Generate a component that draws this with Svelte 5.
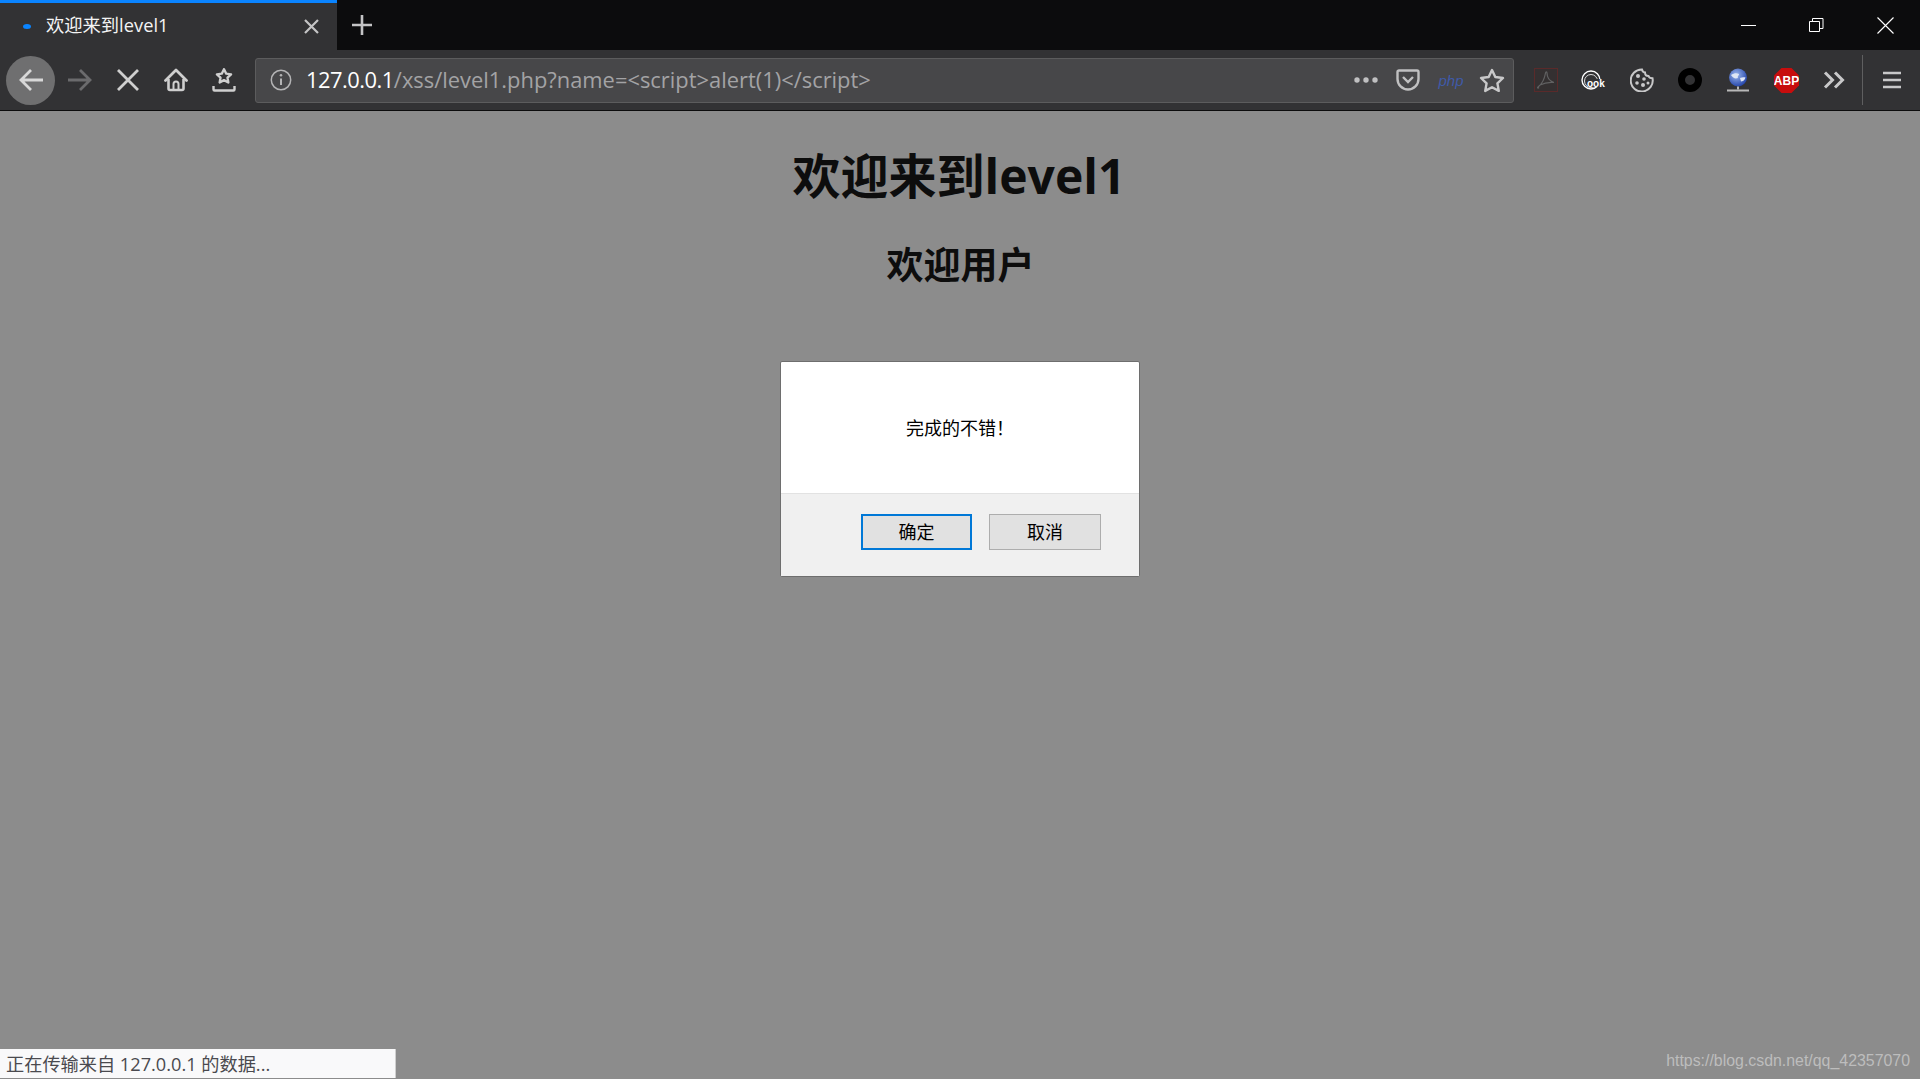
<script lang="ts">
	const title = '欢迎来到level1';
	const host = '127.0.0.1';
	const path = '/xss/level1.php?name=<script>alert(1)</' + 'script>';
</script>

<div class="browser">
	<div class="tabbar">
		<div class="tab">
			<span class="dot"></span>
			<span class="tab-title">{title}</span>
			<svg class="tab-close" width="17" height="17" viewBox="0 0 17 17"><path d="M2 2l13 13M15 2L2 15" stroke="#c4c4c5" stroke-width="2.200" /></svg>
		</div>
		<button class="newtab" aria-label="新建标签页">
			<svg width="22" height="22" viewBox="0 0 22 22"><path d="M11 1v20M1 11h20" stroke="#c4c4c5" stroke-width="2.600" /></svg>
		</button>
		<div class="win-controls">
			<svg width="16" height="16" viewBox="0 0 16 16"><path d="M0 8.500h15" stroke="#fff" stroke-width="1" /></svg>
			<svg width="16" height="16" viewBox="0 0 16 16"><path d="M.5 4.500h10v10H.5zM3.500 4V1.500h10.500v10H11" fill="none" stroke="#fff" stroke-width="1" /></svg>
			<svg width="17" height="17" viewBox="0 0 17 17"><path d="M.5.5l16 16M16.500.5l-16 16" stroke="#fff" stroke-width="1.100" /></svg>
		</div>
	</div>

	<div class="toolbar">
		<div class="nav">
			<button class="btn back" aria-label="后退">
				<svg width="26" height="26" viewBox="0 0 26 26"><path d="M25 13H3M13 3L3 13l10 10" fill="none" stroke="#d8d8d8" stroke-width="2.800" /></svg>
			</button>
			<button class="btn" aria-label="前进">
				<svg width="26" height="26" viewBox="0 0 26 26"><path d="M1 13h22M13 3l10 10-10 10" fill="none" stroke="#6b6b6d" stroke-width="2.800" /></svg>
			</button>
			<button class="btn" aria-label="停止">
				<svg width="24" height="24" viewBox="0 0 24 24"><path d="M2 2l20 20M22 2L2 22" stroke="#cfcfcf" stroke-width="2.800" /></svg>
			</button>
			<button class="btn" aria-label="主页">
				<svg width="24" height="24" viewBox="0 0 24 24"><path d="M1.500 12.500L12 2l10.500 10.500" fill="none" stroke="#cfcfcf" stroke-width="2.800" stroke-linecap="round" stroke-linejoin="round" /><path d="M4.500 11v9.500a1.500 1.500 0 0 0 1.500 1.500h12a1.500 1.500 0 0 0 1.500-1.500V11" fill="none" stroke="#cfcfcf" stroke-width="2.600" /><path d="M9.500 22v-6a2.500 2.500 0 0 1 5 0v6" fill="none" stroke="#cfcfcf" stroke-width="2" /></svg>
			</button>
			<button class="btn" aria-label="收藏">
				<svg width="24" height="24" viewBox="0 0 24 24"><path d="M12 1.500l2.800 5.600 6 .8-4.400 4.200 1 6-5.400-2.900-5.400 2.900 1-6-4.400-4.200 6-.8z" fill="none" stroke="#cfcfcf" stroke-width="3" stroke-linejoin="round" transform="translate(2.400 0) scale(.8)" /><path d="M1.500 18v3.500a1 1 0 0 0 1 1h19a1 1 0 0 0 1-1V18" fill="none" stroke="#cfcfcf" stroke-width="2.400" /></svg>
			</button>
		</div>

		<div class="urlbar">
			<svg class="info" width="22" height="22" viewBox="0 0 22 22"><circle cx="11" cy="11" r="9.700" fill="none" stroke="#b4b4b5" stroke-width="1.500" /><path d="M11 9.500v6.500" stroke="#b4b4b5" stroke-width="2" /><circle cx="11" cy="6.300" r="1.300" fill="#b4b4b5" /></svg>
			<span class="url"><span class="host">{host}</span>{path}</span>
			<div class="url-actions">
				<svg class="dots" width="24" height="6" viewBox="0 0 24 6"><circle cx="3" cy="3" r="2.700" fill="#c0c0c1" /><circle cx="12" cy="3" r="2.700" fill="#c0c0c1" /><circle cx="21" cy="3" r="2.700" fill="#c0c0c1" /></svg>
				<svg class="pocket" width="24" height="22" viewBox="0 0 24 22"><path d="M3 1.500h18a1.500 1.500 0 0 1 1.500 1.500v7a10.500 10.500 0 0 1-21 0V3A1.500 1.500 0 0 1 3 1.500z" fill="none" stroke="#c0c0c1" stroke-width="2.400" /><path d="M7 8l5 5 5-5" fill="none" stroke="#c0c0c1" stroke-width="2.400" /></svg>
				<span class="php">php</span>
				<svg class="star" width="26" height="25" viewBox="0 0 26 25"><path d="M13 2l3.300 7 7.700 1-5.600 5.300 1.400 7.600-6.800-3.700-6.800 3.700 1.400-7.600L2 10l7.700-1z" fill="none" stroke="#c8c8c9" stroke-width="2.400" stroke-linejoin="round" /></svg>
			</div>
		</div>

		<div class="exts">
			<span class="ext">
				<svg width="24" height="24" viewBox="0 0 24 24"><rect x=".5" y=".5" width="23" height="23" fill="#343031" stroke="#5a2a2a" /><path d="M4 19c4-3 6.500-8 7.500-14 .2-1.500 1.500-1.500 1.500 0 0 4 2.500 8 7 9.500M4 19c-1 1 0 1.500 1 .5M6 17c4-2 9-3 14-2.500" fill="none" stroke="#616162" stroke-width="1.200" /></svg>
			</span>
			<span class="ext">
				<svg width="26" height="22" viewBox="0 0 26 22"><circle cx="10" cy="11" r="9" fill="none" stroke="#fff" stroke-width="1.400" /><circle cx="10" cy="12" r="6.500" fill="none" stroke="#ddd" stroke-width="1" /><path d="M7 10h19v8H7z" fill="#323234" /><text x="6" y="17.500" class="cook">ook</text></svg>
			</span>
			<span class="ext">
				<svg width="24" height="24" viewBox="0 0 24 24"><path d="M12 1.500c.5 2 1.500 3 3 3 0 2 1.500 3.500 3.500 3.500 .5 1.500 2 2.200 4 2.300A11 11 0 1 1 12 1.500z" fill="none" stroke="#c8c8c9" stroke-width="2" /><circle cx="8" cy="8" r="2" fill="#c8c8c9" /><circle cx="14" cy="11" r="1.800" fill="#c8c8c9" /><circle cx="7" cy="15" r="1.800" fill="#c8c8c9" /><circle cx="13" cy="17" r="2" fill="#c8c8c9" /><circle cx="18" cy="15" r="1.500" fill="#c8c8c9" /></svg>
			</span>
			<span class="ext"><span class="ring"></span></span>
			<span class="ext">
				<svg width="24" height="25" viewBox="0 0 24 25"><defs><radialGradient id="sphere" cx=".4" cy=".35" r=".7"><stop offset="0" stop-color="#9db8ee" /><stop offset="1" stop-color="#1e3fa6" /></radialGradient></defs><circle cx="12" cy="9.500" r="9" fill="url(#sphere)" /><path d="M5 7c3-2 6-2 8-1 0 2-2 2-1 4-3 1-5 0-7-3zM14 10c2-1 4-1 5.500-.5-1 3-3 4-4.500 4z" fill="#dfe6f5" /><path d="M12 18.500v3" stroke="#b8b8b8" stroke-width="2" /><path d="M1 22.500h22" stroke="#b8b8b8" stroke-width="2" /></svg>
			</span>
			<span class="ext">
				<svg width="25" height="25" viewBox="0 0 25 25"><path d="M7.500 0h10L25 7.500v10L17.500 25h-10L0 17.500v-10z" fill="#c70d0d" /><text x="12.500" y="17" text-anchor="middle" class="abp">ABP</text></svg>
			</span>
			<span class="ext">
				<svg width="22" height="18" viewBox="0 0 22 18"><path d="M2 1.500L9.500 9 2 16.500M12 1.500L19.500 9 12 16.500" fill="none" stroke="#c8c8c9" stroke-width="3" /></svg>
			</span>
		</div>
		<span class="sep"></span>
		<button class="btn menu" aria-label="菜单">
			<svg width="18" height="18" viewBox="0 0 18 18"><path d="M0 2h18M0 9h18M0 16h18" stroke="#c8c8c9" stroke-width="2.600" /></svg>
		</button>
	</div>

	<main class="page">
		<h1>{title}</h1>
		<h2>欢迎用户</h2>
	</main>
</div>

<div class="dialog">
	<div class="message"><span>完成的不错！</span></div>
	<div class="actions">
		<button class="dlg-btn primary">确定</button>
		<button class="dlg-btn">取消</button>
	</div>
</div>

<div class="status">正在传输来自 127.0.0.1 的数据...</div>
<div class="watermark">https://blog.csdn.net/qq_42357070</div>

<style>
	:global(body) {
		margin: 0;
		background: #8c8c8c;
		overflow: hidden;
	}
	.browser {
		display: flex;
		flex-direction: column;
		height: 1079px;
		font-family: "Open Sans", "Noto Sans CJK SC", sans-serif;
	}
	button {
		border: 0;
		background: none;
		padding: 0;
	}
	.tabbar {
		display: flex;
		height: 50px;
		background: #0c0c0d;
	}
	.tab {
		display: flex;
		align-items: center;
		box-sizing: border-box;
		width: 337px;
		border-top: 3px solid #0a84ff;
		background: #323234;
		padding: 0 17px 1px 23px;
	}
	.dot {
		width: 8px;
		height: 5px;
		border-radius: 50%;
		background: #0a84ff;
		margin-right: 15px;
	}
	.tab-title {
		flex: 1;
		margin-top: -5px;
		color: #f4f4f4;
		font-size: 18.3px;
	}
	.newtab {
		display: flex;
		align-items: center;
		justify-content: center;
		width: 50px;
	}
	.win-controls {
		display: flex;
		align-items: center;
		gap: 52px;
		margin-left: auto;
		padding-right: 26px;
	}
	.toolbar {
		display: flex;
		align-items: center;
		height: 60px;
		padding-right: 4px;
		background: #323234;
		border-bottom: 1px solid #0c0c0d;
	}
	.nav {
		display: flex;
		padding-left: 6px;
	}
	.btn {
		display: flex;
		align-items: center;
		justify-content: center;
		width: 48px;
		height: 48px;
	}
	.back {
		width: 49px;
		height: 49px;
		margin-right: 1px;
		border-radius: 50%;
		background: #6f6f70;
	}
	.urlbar {
		display: flex;
		align-items: center;
		flex: 1;
		box-sizing: border-box;
		height: 45px;
		margin: 0 8px 0 7px;
		padding: 0 8.5px 0 14px;
		background: #474749;
		border: 1px solid #5c5c5d;
		border-radius: 3px;
	}
	.info {
		margin-right: 14px;
	}
	.url {
		flex: 1;
		margin-top: -2px;
		color: #a3a3a5;
		font-size: 21.9px;
		white-space: pre;
	}
	.host {
		color: #fff;
		letter-spacing: -0.5px;
	}
	.url-actions {
		display: flex;
		align-items: center;
		gap: 18px;
	}
	.star {
		margin-left: -3.5px;
	}
	.php {
		width: 26px;
		color: #3f5aa8;
		font: italic 15px "Liberation Sans", sans-serif;
		text-align: center;
	}
	.exts {
		display: flex;
	}
	.ext {
		display: flex;
		align-items: center;
		justify-content: center;
		width: 48px;
		height: 48px;
	}
	.ring {
		box-sizing: border-box;
		width: 24px;
		height: 24px;
		border: 7px solid #000;
		border-radius: 50%;
	}
	.cook {
		font: bold 10px "Liberation Sans", sans-serif;
		fill: #fff;
	}
	.abp {
		font: bold 12px "Liberation Sans", sans-serif;
		fill: #fff;
	}
	.sep {
		width: 1px;
		height: 50px;
		margin: 0 5px 0 4px;
		background: #5f5f60;
	}
	.page {
		flex: 1;
		text-align: center;
		color: #0d0d0d;
	}
	h1 {
		margin: 30px 0 0;
		font-size: 48px;
		line-height: 70px;
		font-weight: 700;
		padding-right: 2px;
	}
	h2 {
		margin: 28px 0 0;
		font-size: 37px;
		line-height: 52px;
		font-weight: 700;
		padding-left: 1px;
	}
	.dialog {
		position: absolute;
		left: 780px;
		top: 361px;
		display: flex;
		flex-direction: column;
		box-sizing: border-box;
		width: 360px;
		height: 216px;
		border: 1px solid #6e6e6e;
		border-radius: 2px;
		background: #fff;
		font-family: "Noto Sans CJK SC", sans-serif;
		color: #000;
	}
	.message {
		display: flex;
		align-items: center;
		box-sizing: border-box;
		height: 131px;
		padding: 0 0 2px 125px;
		font-size: 18px;
	}
	.actions {
		display: flex;
		flex: 1;
		gap: 17px;
		padding: 20px 0 0 80px;
		background: #f0f0f0;
		border-top: 1px solid #e2e2e2;
	}
	.dlg-btn {
		box-sizing: border-box;
		width: 112px;
		height: 36px;
		padding-bottom: 2px;
		border: 1px solid #adadad;
		background: #e1e1e1;
		font: 18px "Noto Sans CJK SC", sans-serif;
		color: #000;
	}
	.primary {
		width: 111px;
		border: 2px solid #0078d7;
	}
	.status {
		position: absolute;
		left: 0;
		bottom: 1px;
		box-sizing: border-box;
		width: 396px;
		height: 29px;
		padding: 1px 0 0 6px;
		background: #f9f9fa;
		border-right: 1px solid #cfcfcf;
		color: #4a4a4f;
		font: 18.2px "Open Sans", "Noto Sans CJK SC", sans-serif;
		line-height: 28px;
	}
	.watermark {
		position: absolute;
		right: 10px;
		bottom: 9px;
		color: #bdbdbd;
		font: 15.9px "Liberation Sans", sans-serif;
	}
</style>
